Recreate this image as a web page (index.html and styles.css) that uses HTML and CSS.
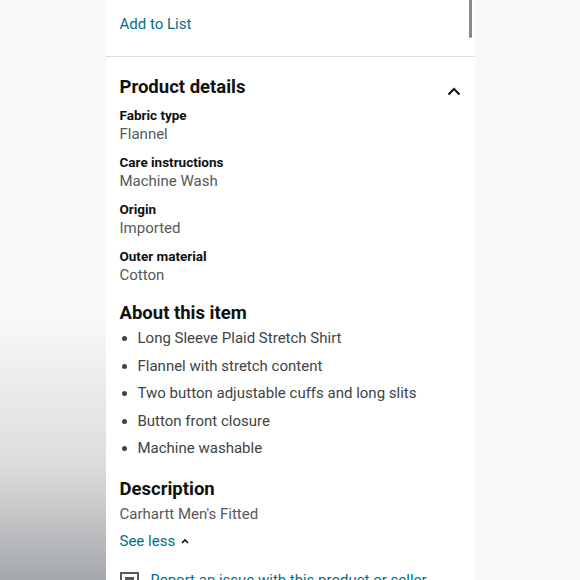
FILE: index.html
```html
<!DOCTYPE html>
<html>
<head>
<meta charset="utf-8">
<link rel="stylesheet" href="styles.css">
</head>
<body>
<div class="panel">
  <div class="scrollbar"></div>
  <div class="top">
    <a class="link">Add to List</a>
  </div>
  <section class="details">
    <div class="details-head">
      <h2>Product details</h2>
      <svg class="chev" width="14" height="9" viewBox="0 0 14 9"><polyline points="1.5,7.5 7,2 12.5,7.5" fill="none" stroke="#0f1111" stroke-width="2"/></svg>
    </div>
    <dl class="attrs">
      <div class="attr"><dt>Fabric type</dt><dd>Flannel</dd></div>
      <div class="attr"><dt>Care instructions</dt><dd>Machine Wash</dd></div>
      <div class="attr"><dt>Origin</dt><dd>Imported</dd></div>
      <div class="attr"><dt>Outer material</dt><dd>Cotton</dd></div>
    </dl>
    <h2 class="sub">About this item</h2>
    <ul class="bullets">
      <li>Long Sleeve Plaid Stretch Shirt</li>
      <li>Flannel with stretch content</li>
      <li>Two button adjustable cuffs and long slits</li>
      <li>Button front closure</li>
      <li>Machine washable</li>
    </ul>
    <h2 class="sub desc-h">Description</h2>
    <p class="desc">Carhartt Men's Fitted</p>
    <a class="link see-less">See less <svg width="8" height="6" viewBox="0 0 8 6"><polyline points="1,5 4,2 7,5" fill="none" stroke="#0f1111" stroke-width="1.6"/></svg></a>
    <div class="report">
      <svg width="19" height="16" viewBox="0 0 19 16"><rect x="1" y="1" width="17" height="16" fill="none" stroke="#565959" stroke-width="2"/><rect x="5" y="5" width="9" height="3" fill="#565959"/></svg>
      <a class="link">Report an issue with this product or seller</a>
    </div>
  </section>
</div>
</body>
</html>
```
FILE: styles.css
```css
html, body {
  margin: 0;
  padding: 0;
  height: 580px;
  overflow: hidden;
}
body {
  background:
    linear-gradient(to bottom, rgba(160,163,166,0) 0%, rgba(160,163,166,0) 55%, rgba(200,202,204,0.6) 80%, rgba(165,168,171,1) 100%) left / 106px 100% no-repeat,
    #f8f8f8;
  font-family: Roboto, "Liberation Sans", sans-serif;
  color: #0f1111;
}
.panel {
  position: relative;
  width: 369px;
  height: 580px;
  margin: 0 auto;
  background: #fff;
  overflow: hidden;
}
.scrollbar {
  position: absolute;
  left: 363px;
  top: 0;
  width: 3px;
  height: 38px;
  border-radius: 0 0 2px 2px;
  background: #8a8a8a;
}
.top {
  height: 57px;
  border-bottom: 1px solid #dddddd;
  padding: 14px 14px 0;
  box-sizing: border-box;
}
.link {
  color: #007185;
  font-size: 15px;
  line-height: 20px;
  text-decoration: none;
}
.details {
  padding: 0 14px;
}
.details-head {
  display: flex;
  justify-content: space-between;
  align-items: center;
  margin-top: 18px;
}
h2 {
  margin: 0;
  font-size: 18.5px;
  line-height: 24px;
  font-weight: 700;
}
.chev {
  margin-top: 8px;
}
.attrs {
  margin: 7px 0 0;
}
.attr {
  margin-bottom: 9px;
}
dt {
  font-size: 13.5px;
  line-height: 18px;
  font-weight: 700;
}
dd {
  margin: 0;
  font-size: 15px;
  line-height: 20px;
  color: #565959;
}
.sub {
  margin-top: 16px;
}
.bullets {
  margin: 0;
  padding: 0 0 0 18px;
}
.bullets li {
  font-size: 15px;
  line-height: 27.5px;
  color: #404444;
}
.desc-h {
  margin-top: 14px;
}
.desc {
  margin: 3px 0 0;
  font-size: 15px;
  line-height: 20px;
  color: #565959;
}
.see-less {
  display: inline-flex;
  align-items: center;
  gap: 6px;
  margin-top: 7px;
}
.report {
  display: flex;
  align-items: center;
  gap: 12px;
  margin-top: 19px;
}
```
